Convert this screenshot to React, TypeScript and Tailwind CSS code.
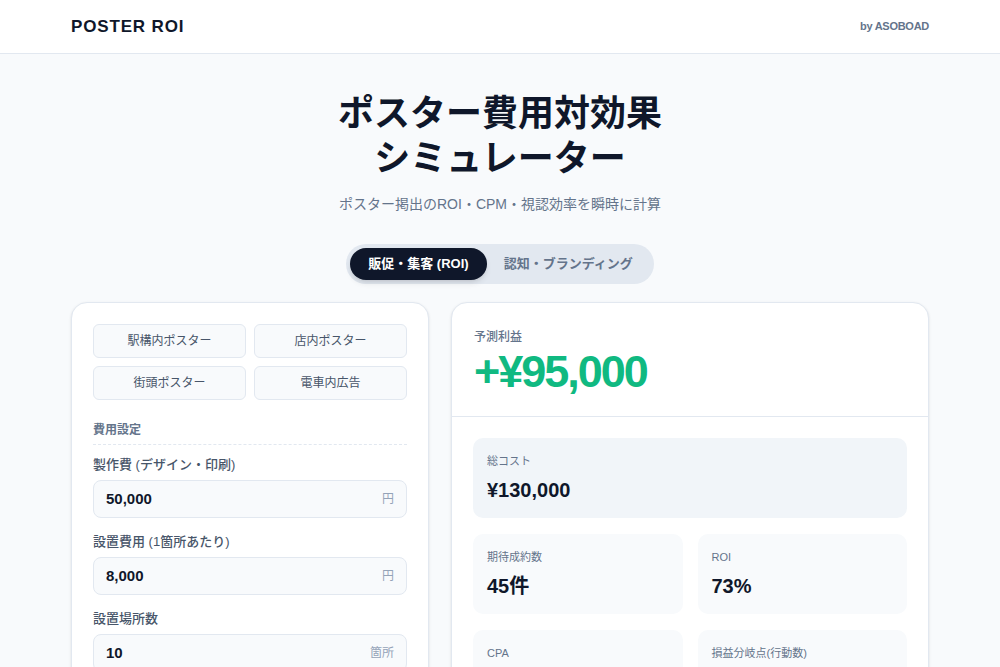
import { useState } from "react";

const PLACEMENTS = ["駅構内ポスター", "店内ポスター", "街頭ポスター", "電車内広告"];

const FIELDS = [
  { label: "製作費 (デザイン・印刷)", value: "50,000", unit: "円" },
  { label: "設置費用 (1箇所あたり)", value: "8,000", unit: "円" },
  { label: "設置場所数", value: "10", unit: "箇所" },
  { label: "掲出期間", value: "4", unit: "週" },
];

const METRICS = [
  { label: "期待成約数", value: "45件" },
  { label: "ROI", value: "73%" },
  { label: "CPA", value: "¥2,889" },
  { label: "損益分岐点(行動数)", value: "26件" },
];

export default function App() {
  const [mode, setMode] = useState<"roi" | "brand">("roi");
  const [placement, setPlacement] = useState<string | null>(null);

  return (
    <div
      className="min-h-screen bg-[#f8fafc] text-[#0f172a]"
      style={{ fontFamily: '"Liberation Sans", "Noto Sans CJK JP", sans-serif' }}
    >
      {/* Header */}
      <header className="bg-white border-b border-[#e2e8f0]">
        <div className="w-[858px] mx-auto h-[53px] flex items-center justify-between">
          <span className="text-[17px] font-bold tracking-wider text-[#0f172a]">POSTER ROI</span>
          <span className="text-[11px] font-semibold text-[#64748b] tracking-tight">by ASOBOAD</span>
        </div>
      </header>

      <main className="w-[858px] mx-auto pt-[37px] pb-10">
        {/* Hero */}
        <div className="text-center">
          <h1 className="text-[36px] leading-[45px] font-bold text-[#0f172a]">
            ポスター費用対効果
            <br />
            シミュレーター
          </h1>
          <p className="mt-[13px] text-[14px] leading-[21px] text-[#64748b]">
            ポスター掲出のROI・CPM・視認効率を瞬時に計算
          </p>
        </div>

        {/* Mode tabs */}
        <div className="flex justify-center mt-[29px]">
          <div className="flex p-1 rounded-full bg-[#e2e8f0]">
            <button
              onClick={() => setMode("roi")}
              className={
                mode === "roi"
                  ? "h-8 px-[18px] rounded-full text-[13px] font-bold bg-[#0f172a] text-white shadow-md"
                  : "h-8 px-[18px] rounded-full text-[13px] font-bold text-[#64748b]"
              }
            >
              販促・集客 (ROI)
            </button>
            <button
              onClick={() => setMode("brand")}
              className={
                mode === "brand"
                  ? "h-8 px-[17px] rounded-full text-[13px] font-bold bg-[#0f172a] text-white shadow-md"
                  : "h-8 px-[17px] rounded-full text-[13px] font-bold text-[#64748b]"
              }
            >
              認知・ブランディング
            </button>
          </div>
        </div>

        {/* Main grid */}
        <div className="grid grid-cols-[358px_1fr] gap-[22px] mt-[18px] items-start">
          {/* Inputs card */}
          <section className="bg-white border border-[#e2e8f0] rounded-2xl p-[21px] shadow-sm">
            <div className="grid grid-cols-2 gap-2">
              {PLACEMENTS.map((p) => (
                <button
                  key={p}
                  onClick={() => setPlacement(p)}
                  className={
                    placement === p
                      ? "h-[34px] rounded-md border border-[#0f172a] bg-[#0f172a] text-white text-[12px]"
                      : "h-[34px] rounded-md border border-[#e2e8f0] bg-[#f8fafc] text-[#475569] text-[12px]"
                  }
                >
                  {p}
                </button>
              ))}
            </div>

            <div className="mt-[22px] pb-[6px] border-b border-dashed border-[#e2e8f0] text-[12px] leading-4 font-semibold text-[#64748b]">
              費用設定
            </div>

            <div className="mt-[11px] flex flex-col gap-[15px]">
              {FIELDS.map((f) => (
                <div key={f.label}>
                  <label className="block text-[13px] leading-[18px] font-medium text-[#475569] mb-1.5">
                    {f.label}
                  </label>
                  <div className="h-[38px] flex items-center px-3 rounded-lg border border-[#e2e8f0] bg-[#f8fafc]">
                    <input
                      readOnly
                      value={f.value}
                      className="flex-1 min-w-0 bg-transparent outline-none text-[15px] font-bold text-[#0f172a]"
                    />
                    <span className="text-[12px] text-[#94a3b8]">{f.unit}</span>
                  </div>
                </div>
              ))}
            </div>
          </section>

          {/* Results card */}
          <section className="bg-white border border-[#e2e8f0] rounded-2xl shadow-sm overflow-hidden">
            <div className="px-[22px] pt-[26px] pb-[18px] border-b border-[#e2e8f0]">
              <div className="text-[12px] leading-4 font-medium text-[#64748b]">予測利益</div>
              <div className="mt-px text-[45px] leading-[52px] font-bold tracking-[-0.045em] text-[#10b981]">
                +¥95,000
              </div>
            </div>

            <div className="p-[21px] flex flex-col gap-4">
              <div className="rounded-[10px] bg-[#f1f5f9] px-[14px] pt-[15px] pb-[14px]">
                <div className="text-[11px] leading-4 text-[#64748b]">総コスト</div>
                <div className="mt-[7px] text-[20px] leading-7 font-bold text-[#0f172a]">¥130,000</div>
              </div>
              <div className="grid grid-cols-2 gap-x-[15px] gap-y-4">
                {METRICS.map((m) => (
                  <div key={m.label} className="rounded-[10px] bg-[#f8fafc] px-[14px] pt-[15px] pb-[14px]">
                    <div className="text-[11px] leading-4 text-[#64748b]">{m.label}</div>
                    <div className="mt-[7px] text-[20px] leading-7 font-bold text-[#0f172a]">{m.value}</div>
                  </div>
                ))}
              </div>
            </div>
          </section>
        </div>
      </main>
    </div>
  );
}
